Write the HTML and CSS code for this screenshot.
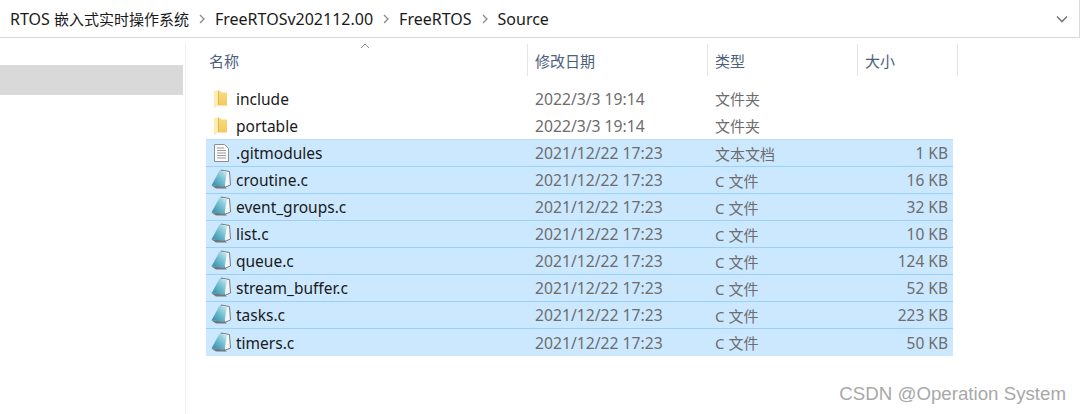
FILE: index.html
```html
<!DOCTYPE html>
<html lang="zh-CN">
<head>
    <meta charset="UTF-8">
    <title>Source</title>
    <link rel="stylesheet" href="styles.css">
</head>
<body>
    <svg class="icon-defs" width="0" height="0">
        <defs>
            <linearGradient id="folder-fill" x1="0" y1="0" x2="0" y2="1">
                <stop offset="0" stop-color="#f9dc7e"/>
                <stop offset="1" stop-color="#f3c95f"/>
            </linearGradient>
            <linearGradient id="pad-fill" x1="0" y1="1" x2="1" y2="0">
                <stop offset="0" stop-color="#2b87a3"/>
                <stop offset="0.55" stop-color="#76c0d3"/>
                <stop offset="1" stop-color="#d3edf2"/>
            </linearGradient>
            <symbol id="folder" viewBox="0 0 13 18">
                <path d="M3 1h3.500l1 1.500H13V15.500H3z" fill="url(#folder-fill)"/>
                <path d="M0 1l4-.5V15l-3.200 3H0z" fill="#fdecb2"/>
                <path d="M4.500 .5V15" stroke="#e4b850"/>
            </symbol>
            <symbol id="doc" viewBox="0 0 15 18">
                <path d="M.5 .5h10l4 4v13H.5z" fill="#fafafa" stroke="#8f8f8f"/>
                <path d="M3 4h7M3 6.500h9M3 9h9M3 11.500h9M3 14h9" stroke="#9c9c9c"/>
            </symbol>
            <symbol id="cfile" viewBox="0 0 20 20">
                <path d="M10 1l8.500 1.500 1 13.500-6 2.500z" fill="#f4f7f7" stroke="#6f7c82"/>
                <path d="M.5 16.500L8.500 1.500 16 3l-2.500 14.500z" fill="url(#pad-fill)"/>
                <path d="M.5 16.500l13 1 2.500 2H5z" fill="#6c787b"/>
            </symbol>
        </defs>
    </svg>

    <div class="address-bar">
        <span class="crumb">RTOS <span class="cjk">嵌入式实时操作系统</span></span>
        <svg class="crumb-arrow" width="6" height="10" viewBox="0 0 6 10"><path d="M1 1l4 4-4 4" fill="none" stroke="#8a8a8a" stroke-width="1.300"/></svg>
        <span class="crumb">FreeRTOSv202112.00</span>
        <svg class="crumb-arrow" width="6" height="10" viewBox="0 0 6 10"><path d="M1 1l4 4-4 4" fill="none" stroke="#8a8a8a" stroke-width="1.300"/></svg>
        <span class="crumb">FreeRTOS</span>
        <svg class="crumb-arrow" width="6" height="10" viewBox="0 0 6 10"><path d="M1 1l4 4-4 4" fill="none" stroke="#8a8a8a" stroke-width="1.300"/></svg>
        <span class="crumb">Source</span>
        <svg class="dropdown" width="12" height="8" viewBox="0 0 12 8"><path d="M1 1.500l5 5 5-5" fill="none" stroke="#7a7a7a" stroke-width="1.600"/></svg>
    </div>

    <div class="explorer">
        <div class="sidebar">
            <div class="nav-item"></div>
        </div>

        <div class="file-pane">
            <div class="columns">
                <div class="col-head">名称
                    <svg class="sort-arrow" width="10" height="6" viewBox="0 0 10 6"><path d="M1 5l4-4 4 4" fill="none" stroke="#8a8a8a"/></svg>
                </div>
                <div class="col-head">修改日期</div>
                <div class="col-head">类型</div>
                <div class="col-head">大小</div>
            </div>

            <div class="rows">
                <div class="row">
                    <div class="name"><span class="slot"><svg class="icon-folder" width="13" height="18"><use href="#folder"/></svg></span>include</div>
                    <div class="cell date">2022/3/3 19:14</div>
                    <div class="cell type">文件夹</div>
                    <div class="cell size"></div>
                </div>
                <div class="row">
                    <div class="name"><span class="slot"><svg class="icon-folder" width="13" height="18"><use href="#folder"/></svg></span>portable</div>
                    <div class="cell date">2022/3/3 19:14</div>
                    <div class="cell type">文件夹</div>
                    <div class="cell size"></div>
                </div>
                <div class="row selected">
                    <div class="name"><span class="slot"><svg class="icon-doc" width="15" height="18"><use href="#doc"/></svg></span>.gitmodules</div>
                    <div class="cell date">2021/12/22 17:23</div>
                    <div class="cell type">文本文档</div>
                    <div class="cell size">1 KB</div>
                </div>
                <div class="row selected">
                    <div class="name"><span class="slot"><svg class="icon-c" width="20" height="20"><use href="#cfile"/></svg></span>croutine.c</div>
                    <div class="cell date">2021/12/22 17:23</div>
                    <div class="cell type">C 文件</div>
                    <div class="cell size">16 KB</div>
                </div>
                <div class="row selected">
                    <div class="name"><span class="slot"><svg class="icon-c" width="20" height="20"><use href="#cfile"/></svg></span>event_groups.c</div>
                    <div class="cell date">2021/12/22 17:23</div>
                    <div class="cell type">C 文件</div>
                    <div class="cell size">32 KB</div>
                </div>
                <div class="row selected">
                    <div class="name"><span class="slot"><svg class="icon-c" width="20" height="20"><use href="#cfile"/></svg></span>list.c</div>
                    <div class="cell date">2021/12/22 17:23</div>
                    <div class="cell type">C 文件</div>
                    <div class="cell size">10 KB</div>
                </div>
                <div class="row selected">
                    <div class="name"><span class="slot"><svg class="icon-c" width="20" height="20"><use href="#cfile"/></svg></span>queue.c</div>
                    <div class="cell date">2021/12/22 17:23</div>
                    <div class="cell type">C 文件</div>
                    <div class="cell size">124 KB</div>
                </div>
                <div class="row selected">
                    <div class="name"><span class="slot"><svg class="icon-c" width="20" height="20"><use href="#cfile"/></svg></span>stream_buffer.c</div>
                    <div class="cell date">2021/12/22 17:23</div>
                    <div class="cell type">C 文件</div>
                    <div class="cell size">52 KB</div>
                </div>
                <div class="row selected">
                    <div class="name"><span class="slot"><svg class="icon-c" width="20" height="20"><use href="#cfile"/></svg></span>tasks.c</div>
                    <div class="cell date">2021/12/22 17:23</div>
                    <div class="cell type">C 文件</div>
                    <div class="cell size">223 KB</div>
                </div>
                <div class="row selected">
                    <div class="name"><span class="slot"><svg class="icon-c" width="20" height="20"><use href="#cfile"/></svg></span>timers.c</div>
                    <div class="cell date">2021/12/22 17:23</div>
                    <div class="cell type">C 文件</div>
                    <div class="cell size">50 KB</div>
                </div>
            </div>
        </div>
    </div>

    <div class="watermark">CSDN @Operation System</div>
</body>
</html>
```

FILE: styles.css
```css
:root {
    --line: #e5e5e5;
    --select: #cce8ff;
    --select-line: #99d1ff;
    --muted: #6d6d6d;
}

html, body {
    height: 100%;
}

body {
    margin: 0;
    background: #fff;
    font-family: "Noto Sans", "Noto Sans CJK SC", sans-serif;
    font-size: 15.500px;
    color: #1a1a1a;
    overflow: hidden;
}

.icon-defs {
    position: absolute;
}

.address-bar {
    height: 37px;
    margin-right: 1px;
    padding: 0 11px 0 10px;
    display: flex;
    align-items: center;
    gap: 10px;
    font-size: 16px;
    border-bottom: 1px solid #d9d9d9;
    border-right: 1px solid #d9d9d9;
}

.crumb {
    white-space: nowrap;
}

.cjk {
    font-size: 15px;
}

.dropdown {
    margin-left: auto;
}

.explorer {
    display: flex;
    height: 376px;
}

.sidebar {
    width: 185px;
    margin-top: 6px;
    padding-top: 21px;
    border-right: 1px solid #f0f0f0;
}

.nav-item {
    width: 183px;
    height: 30px;
    background: #d9d9d9;
}

.file-pane {
    padding-left: 20px;
}

.columns {
    display: grid;
    grid-template-columns: 322px 180px 150px 100px;
    height: 32px;
    margin-top: 6px;
    margin-bottom: 9px;
}

.col-head {
    position: relative;
    display: flex;
    align-items: center;
    padding-left: 7px;
    color: #4c607a;
    font-size: 15px;
    border-right: 1px solid var(--line);
}

.col-head:first-child {
    padding-left: 3px;
}

.sort-arrow {
    position: absolute;
    left: 154px;
    top: -1px;
}

.row {
    display: grid;
    grid-template-columns: 322px 180px 150px 95px;
    width: 747px;
    height: 27px;
    box-sizing: border-box;
    align-items: center;
}

.row.selected {
    background: var(--select);
    border-bottom: 1px solid var(--select-line);
}

.row:not(.selected) + .selected {
    height: 28px;
    border-top: 1px solid #b8defc;
}

.row.selected:last-child {
    border-bottom: none;
}

.name {
    display: flex;
    align-items: center;
    white-space: nowrap;
}

.slot {
    flex: none;
    display: flex;
    align-items: center;
    width: 30px;
}

.icon-folder,
.icon-doc {
    margin-left: 8px;
}

.icon-c {
    margin: 0 0 2px 5px;
}

.cell {
    padding-left: 7px;
    color: var(--muted);
    white-space: nowrap;
}

.cell.date {
    font-size: 15.700px;
}

.cell.type {
    font-size: 15px;
}

.cell.size {
    padding: 0 5px 0 0;
    text-align: right;
}

.watermark {
    position: absolute;
    right: 15px;
    bottom: 9px;
    font-family: "Liberation Sans", sans-serif;
    font-size: 18.700px;
    color: #a8a8a8;
}
```
